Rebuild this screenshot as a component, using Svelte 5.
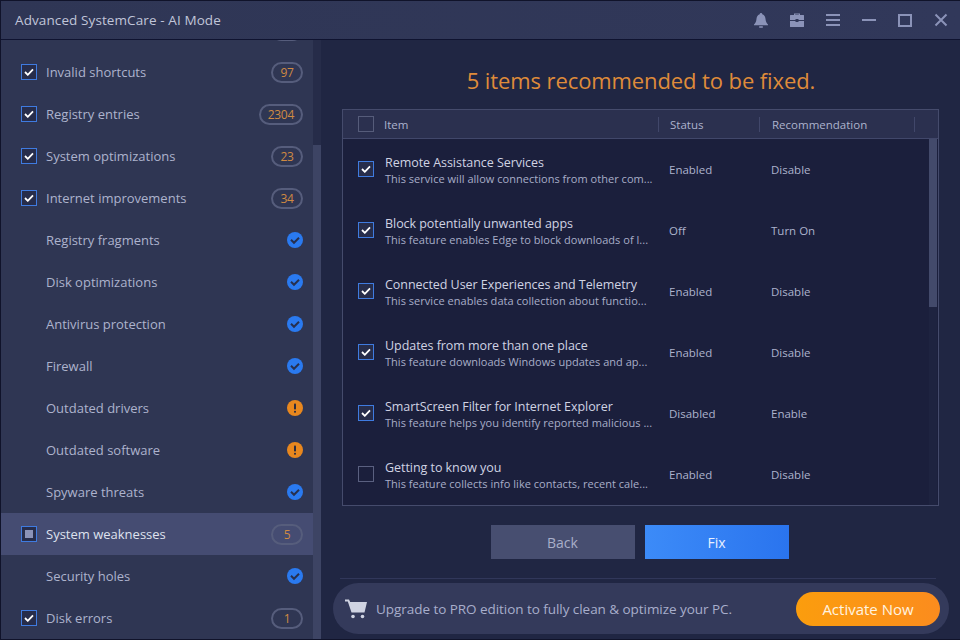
<script>
  const side = [
    { label: '', badge: ' ' },
    { label: 'Invalid shortcuts', badge: '97', check: true },
    { label: 'Registry entries', badge: '2304', check: true },
    { label: 'System optimizations', badge: '23', check: true },
    { label: 'Internet improvements', badge: '34', check: true },
    { label: 'Registry fragments', icon: 'ok' },
    { label: 'Disk optimizations', icon: 'ok' },
    { label: 'Antivirus protection', icon: 'ok' },
    { label: 'Firewall', icon: 'ok' },
    { label: 'Outdated drivers', icon: 'warn' },
    { label: 'Outdated software', icon: 'warn' },
    { label: 'Spyware threats', icon: 'ok' },
    { label: 'System weaknesses', badge: '5', partial: true, active: true },
    { label: 'Security holes', icon: 'ok' },
    { label: 'Disk errors', badge: '1', check: true }
  ];
  const rows = [
    ['Remote Assistance Services', 'This service will allow connections from other com...', 'Enabled', 'Disable', true],
    ['Block potentially unwanted apps', 'This feature enables Edge to block downloads of l...', 'Off', 'Turn On', true],
    ['Connected User Experiences and Telemetry', 'This service enables data collection about functio...', 'Enabled', 'Disable', true],
    ['Updates from more than one place', 'This feature downloads Windows updates and ap...', 'Enabled', 'Disable', true],
    ['SmartScreen Filter for Internet Explorer', 'This feature helps you identify reported malicious ...', 'Disabled', 'Enable', true],
    ['Getting to know you', 'This feature collects info like contacts, recent cale...', 'Enabled', 'Disable', false]
  ];
</script>

<div class="win">
  <header class="title">
    <span class="name">Advanced SystemCare - AI Mode</span>
    <div class="tools">
      <svg width="16" height="16" viewBox="0 0 16 16"><path d="M8 1a1.3 1.3 0 0 1 1.3 1.3C11.6 3 12.4 5 12.6 7.500c.2 2.300 1 3.700 2.400 4.900v.8H1v-.8c1.400-1.200 2.200-2.600 2.400-4.900C3.600 5 4.400 3 6.700 2.300A1.300 1.300 0 0 1 8 1z" /><rect x="6" y="14.200" width="4" height="1.500" rx=".7" /></svg>
      <svg width="16" height="16" viewBox="0 0 16 16"><path d="M5 3V1.500h6V3h3.500a.5.500 0 0 1 .5.500V8H9.500V7h-3v1H1V3.500a.5.500 0 0 1 .5-.5H5zm1.200 0h3.600v-.5H6.200V3z" fill-rule="evenodd"/><path d="M1 9h5.500v1h3V9H15v5.500a.5.500 0 0 1-.5.500h-13a.5.500 0 0 1-.5-.5V9z"/></svg>
      <svg width="16" height="16" viewBox="0 0 16 16"><rect x="1" y="2" width="14" height="2"/><rect x="1" y="7" width="14" height="2"/><rect x="1" y="12" width="14" height="2"/></svg>
      <svg width="16" height="16" viewBox="0 0 16 16"><rect x="1" y="7" width="14" height="2"/></svg>
      <svg width="16" height="16" viewBox="0 0 16 16"><path d="M1 2h14v13H1V2zm2 2v9h10V4H3z" fill-rule="evenodd"/></svg>
      <svg width="16" height="16" viewBox="0 0 16 16"><path d="M2.500 2.500l11 11M13.500 2.500l-11 11" stroke="#8b93b8" stroke-width="2" fill="none"/></svg>
    </div>
  </header>

  <div class="body">
    <aside class="side">
      <ul class="list">
        {#each side as s}
          <li class="item" class:active={s.active}>
            <span class="lead">
              {#if s.check}
                <span class="cb"><svg width="10" height="8" viewBox="0 0 10 8"><path d="M1 4l2.800 2.800L9 1.300" fill="none" stroke="#fff" stroke-width="1.800"/></svg></span>
              {:else if s.partial}
                <span class="cb"><i class="part"></i></span>
              {/if}
            </span>
            <span class="lab">{s.label}</span>
            {#if s.badge}
              <span class="badge">{s.badge}</span>
            {:else if s.icon === 'ok'}
              <svg class="st" width="16" height="16" viewBox="0 0 16 16"><circle cx="8" cy="8" r="8" fill="#2a7af0"/><path d="M4 7.800l3 3 5-5" fill="none" stroke="#27304f" stroke-width="2"/></svg>
            {:else if s.icon === 'warn'}
              <svg class="st" width="16" height="16" viewBox="0 0 16 16"><circle cx="8" cy="8" r="8" fill="#e8871e"/><rect x="7" y="3.500" width="2" height="6" rx=".8" fill="#2b2c40"/><rect x="7" y="10.800" width="2" height="2" rx=".8" fill="#2b2c40"/></svg>
            {/if}
          </li>
        {/each}
      </ul>
      <div class="sbar"><div class="sthumb"></div></div>
    </aside>

    <main class="main">
      <h1>5 items recommended to be fixed.</h1>
      <section class="table">
        <div class="thead">
          <span class="c0"><span class="cb plain"></span></span>
          <span class="c1">Item</span>
          <span class="c2">Status</span>
          <span class="c3">Recommendation</span>
          <span class="c4"></span>
        </div>
        <div class="tbody">
          <div class="rows">
            {#each rows as r}
              <div class="row">
                <span class="c0">
                  <span class="cb" class:off={!r[4]}>
                    {#if r[4]}<svg width="10" height="8" viewBox="0 0 10 8"><path d="M1 4l2.800 2.800L9 1.300" fill="none" stroke="#fff" stroke-width="1.800"/></svg>{/if}
                  </span>
                </span>
                <div class="c1 txt"><div class="t">{r[0]}</div><div class="d">{r[1]}</div></div>
                <span class="c2 v">{r[2]}</span>
                <span class="c3 v">{r[3]}</span>
              </div>
            {/each}
          </div>
          <div class="tbar"><div class="tthumb"></div></div>
        </div>
      </section>
      <div class="btns">
        <button class="btn back">Back</button>
        <button class="btn fix">Fix</button>
      </div>
      <div class="rule"></div>
      <footer class="promo">
        <svg class="cart" width="24" height="22" viewBox="0 0 24 22"><path d="M1 1.500h4l1.200 2.500H23l-2.500 10.500H7.500L3.800 3.500H1z" fill="#cfd3e2"/><circle cx="9" cy="18.500" r="1.800" fill="#cfd3e2"/><circle cx="18.500" cy="18.500" r="1.800" fill="#cfd3e2"/></svg>
        <span class="msg">Upgrade to PRO edition to fully clean &amp; optimize your PC.</span>
        <button class="act">Activate Now</button>
      </footer>
    </main>
  </div>
</div>

<style>
  :global(body) { margin: 0; background: #0d1024; }
  * { box-sizing: border-box; }
  .win {
    width: 960px; height: 640px; overflow: hidden; display: flex; flex-direction: column;
    border: 1px solid #10132a; border-right: 0;
    font-family: "Open Sans", "Noto Sans", sans-serif; font-size: 13px; color: #adb3cd;
    background: #202643;
  }
  .title {
    height: 39px; flex: none; display: flex; align-items: center; justify-content: space-between;
    padding: 0 11px 0 14px;
    background: linear-gradient(90deg, #2f3655, #31385a);
    border-bottom: 1px solid #0f1330;
  }
  .name { font-size: 13.500px; color: #c0c5d9; letter-spacing: .1px; }
  .tools { display: flex; gap: 20px; fill: #8b93b8; }
  .tools svg { display: block; }
  .body { flex: 1; min-height: 0; display: flex; }
  .side { width: 320px; flex: none; display: flex; background: #2f3653; overflow: hidden; }
  .list { list-style: none; margin: -31px 0 0; padding: 0; width: 312px; flex: none; }
  .item { height: 42px; display: flex; align-items: center; padding: 0 10px 0 20px; }
  .item.active { background: #454c72; color: #dfe2ee; }
  .lead { width: 25px; flex: none; display: flex; }
  .lab { flex: 1; letter-spacing: 0; }
  .cb {
    width: 16px; height: 16px; border: 1px solid #3f7be0; display: flex; align-items: center; justify-content: center;
    background: #272d4b;
  }
  .cb.plain { border-color: #565c7a; background: transparent; }
  .cb.off { border-color: #5a6080; background: transparent; }
  .part { width: 8px; height: 8px; background: #8b93b8; display: block; }
  .badge {
    min-width: 32px; height: 21px; padding: 0 7px; border: 2px solid #565d7c; border-radius: 11px;
    display: flex; align-items: center; justify-content: center;
    font-size: 12px; letter-spacing: -.3px; color: #cf8a42;
  }
  .st { display: block; }
  .sbar { width: 8px; flex: none; background: #262c49; }
  .sthumb { margin-top: 105px; height: 495px; background: #3d4464; }
  .main { flex: 1; min-width: 0; padding: 0 0 0 12px; display: flex; flex-direction: column; }
  h1 {
    margin: 0; height: 69px; padding-top: 24px; font-weight: 400; font-size: 22px; line-height: 33px;
    color: #df8b3a; text-align: center; padding-right: 11px; letter-spacing: -.1px;
  }
  .table {
    margin-left: 9px; width: 597px; height: 397px; flex: none; border: 1px solid #454b6c;
    display: flex; flex-direction: column; background: #1b1f3c;
  }
  .thead {
    height: 29px; flex: none; display: flex; align-items: center; font-size: 11.500px;
    background: #2b304f; border-bottom: 1px solid #41476a;
  }
  .c0 { width: 41px; flex: none; padding-left: 15px; display: flex; }
  .c1 { width: 274px; flex: none; }
  .c2 { width: 101px; flex: none; padding-left: 11px; }
  .c3 { width: 155px; flex: none; padding-left: 12px; }
  .thead .c2, .thead .c3, .thead .c4 { border-left: 1px solid #41476a; height: 15px; line-height: 15px; }
  .thead .c4 { width: 1px; }
  .tbody { flex: 1; min-height: 0; display: flex; overflow: hidden; }
  .rows { flex: 1; min-width: 0; }
  .row { height: 61px; display: flex; align-items: center; }
  .row .c0 { padding-bottom: 1px; }
  .txt { padding-top: 2px; padding-left: 1px; }
  .t { font-size: 12.500px; line-height: 16px; color: #d0d3e3; letter-spacing: -.05px; white-space: nowrap; }
  .d { font-size: 11px; line-height: 16px; color: #a8aec8; letter-spacing: .03px; white-space: nowrap; }
  .v { font-size: 11.500px; }
  .tbar { width: 8px; flex: none; background: #1e2340; margin-right: 1px; }
  .tthumb { height: 168px; background: #434a6b; }
  .btns { display: flex; gap: 10px; justify-content: center; margin-top: 19px; padding-right: 14px; }
  .btn {
    width: 144px; height: 34px; border: 0; font: inherit; font-size: 14px; padding: 0;
  }
  .back { background: #474e70; color: #a9afc9; }
  .fix { background: linear-gradient(90deg, #3c8bf8, #2a74ee); color: #e8f0ff; }
  .rule { height: 1px; margin: 19px 24px 0 7px; background: #31375a; }
  .promo {
    height: 51px; margin: 4px 11px 0 0; flex: none; border-radius: 26px; background: #343a5b;
    display: flex; align-items: center; padding: 0 9px 0 11px;
  }
  .cart { flex: none; }
  .msg { flex: 1; margin-left: 8px; font-size: 13.500px; color: #a8aecb; letter-spacing: -.05px; }
  .act {
    width: 144px; height: 34px; border: 0; border-radius: 17px; font: inherit; font-size: 15px; padding: 0;
    background: linear-gradient(90deg, #fb9d0d, #fb8c1e); color: #fff3e0;
  }
</style>
